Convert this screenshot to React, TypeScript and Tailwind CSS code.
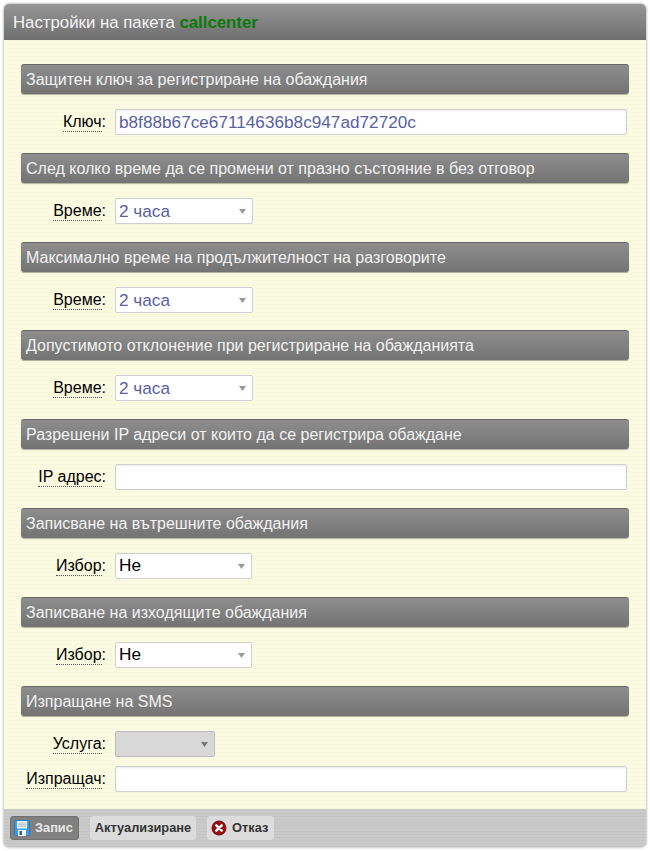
function Bar({ children }: { children: React.ReactNode }) {
  return (
    <div className="h-[30px] flex items-center pl-[5px] rounded-[3px] border-t border-[#666] bg-gradient-to-b from-[#8e8e8e] to-[#737373] text-[16px] text-[#f2f2f2] shadow-[0_1px_1px_rgba(0,0,0,0.3)]">
      {children}
    </div>
  );
}

function Row({ label, children }: { label: string; children: React.ReactNode }) {
  return (
    <div className="flex items-center h-[26px]">
      <div className="w-[85px] shrink-0 flex justify-end text-[16px] leading-[18px] text-black">
        <span className="border-b border-dotted border-[#555]">{label}</span>:
      </div>
      <div className="w-[9px] shrink-0" />
      {children}
    </div>
  );
}

function TextBox({ value }: { value?: string }) {
  return (
    <div className="w-[512px] h-[26px] flex items-center pl-[3px] pt-[1px] bg-white border border-[#cfcfcf] rounded-[2px] text-[17.2px] text-[#5a5f9f] shadow-[inset_0_1px_2px_rgba(0,0,0,0.08)]">
      {value}
    </div>
  );
}

function SelectBox({ value, width, dark, disabled }: { value?: string; width: string; dark?: boolean; disabled?: boolean }) {
  return (
    <div
      className={`${width} h-[26px] flex items-center justify-between pl-[3px] pr-[6px] border rounded-[2px] text-[17.2px] ${
        dark ? 'text-black' : 'pt-[1px] text-[#5a5f9f]'
      } ${disabled ? 'bg-[#d8d8d8] border-[#bdbdbd]' : 'bg-white border-[#cfcfcf]'}`}
    >
      <span>{value}</span>
      <svg width="7" height="5" viewBox="0 0 7 5">
        <path d="M0 0h7L3.5 5z" fill={disabled ? '#777' : '#999'} />
      </svg>
    </div>
  );
}

function FloppyIcon() {
  return (
    <svg width="16" height="16" viewBox="0 0 16 16">
      <rect x="0.5" y="0.5" width="15" height="15" rx="1" fill="#3d9be0" stroke="#2a78b8" />
      <rect x="3" y="1" width="10" height="7.5" fill="#f4f8fb" />
      <path d="M4 3h8M4 4.7h8M4 6.4h8" stroke="#9aa8b5" strokeWidth="0.8" />
      <rect x="4" y="10" width="8" height="6" fill="#f0f4f8" />
      <rect x="5.5" y="11" width="2.5" height="4" fill="#2a5f8f" />
    </svg>
  );
}

function CancelIcon() {
  return (
    <svg width="16" height="16" viewBox="0 0 16 16">
      <circle cx="8" cy="8" r="7.5" fill="#8e1212" />
      <path d="M5.3 5.3l5.4 5.4M10.7 5.3l-5.4 5.4" stroke="#fff" strokeWidth="2.4" strokeLinecap="round" />
    </svg>
  );
}

const sections = [
  { title: 'Защитен ключ за регистриране на обаждания', label: 'Ключ', gap: 'mb-[18px]', kind: 'key' },
  { title: 'След колко време да се промени от празно състояние в без отговор', label: 'Време', gap: 'mb-[18px]', kind: 'time' },
  { title: 'Максимално време на продължителност на разговорите', label: 'Време', gap: 'mb-[17px]', kind: 'time' },
  { title: 'Допустимото отклонение при регистриране на обажданията', label: 'Време', gap: 'mb-[18px]', kind: 'time' },
  { title: 'Разрешени IP адреси от които да се регистрира обаждане', label: 'IP адрес', gap: 'mb-[18px]', kind: 'ip' },
  { title: 'Записване на вътрешните обаждания', label: 'Избор', gap: 'mb-[18px]', kind: 'choice' },
  { title: 'Записване на изходящите обаждания', label: 'Избор', gap: 'mb-[18px]', kind: 'choice' },
];

export default function App() {
  return (
    <div className="w-[650px] h-[851px] bg-white pt-[4px] pl-[4px] font-['Liberation_Sans',Arial,sans-serif]">
      <div className="w-[642px] h-[843px] flex flex-col rounded-[5px] overflow-hidden shadow-[0_0_3px_rgba(0,0,0,0.45)]">
        <div className="h-[36px] shrink-0 flex items-center pl-[9px] pt-[1px] bg-gradient-to-b from-[#969696] to-[#6f6f6f] text-[16.8px] text-[#f4f4f4]">
          Настройки на пакета&nbsp;<b className="text-[#0a7a0a]">callcenter</b>
        </div>
        <div className="flex-1 px-[17px] pt-[24px] bg-[#fbfbe1] bg-[repeating-linear-gradient(0deg,rgba(0,0,0,0.012)_0_1px,transparent_1px_4px)]">
          {sections.map((s) => (
            <div key={s.title} className={s.gap}>
              <Bar>{s.title}</Bar>
              <div className="mt-[15px]">
                <Row label={s.label}>
                  {s.kind === 'key' && <TextBox value="b8f88b67ce67114636b8c947ad72720c" />}
                  {s.kind === 'ip' && <TextBox />}
                  {s.kind === 'time' && <SelectBox value="2 часа" width="w-[138px]" />}
                  {s.kind === 'choice' && <SelectBox value="Не" width="w-[137px]" dark />}
                </Row>
              </div>
            </div>
          ))}
          <Bar>Изпращане на SMS</Bar>
          <div className="mt-[15px] flex flex-col gap-[9px]">
            <Row label="Услуга">
              <SelectBox width="w-[100px]" disabled />
            </Row>
            <Row label="Изпращач">
              <TextBox />
            </Row>
          </div>
        </div>
        <div className="h-[38px] shrink-0 flex items-center gap-[11px] pl-[6px] bg-[#c8c8c8] bg-[repeating-linear-gradient(0deg,#c4c4c4_0_1px,#cacaca_1px_3px)] text-[12.8px] font-bold">
          <div className="h-[24px] w-[69px] flex items-center gap-[5px] pl-[3px] rounded-[3px] bg-[#808080] border border-[#707070] text-[#e8e8e8]">
            <FloppyIcon />
            Запис
          </div>
          <div className="h-[24px] w-[106px] flex items-center justify-center rounded-[3px] bg-[#dcdcdc] text-[#333]">
            Актуализиране
          </div>
          <div className="h-[24px] w-[67px] flex items-center gap-[5px] pl-[4px] rounded-[3px] bg-[#dcdcdc] text-[#333]">
            <CancelIcon />
            Отказ
          </div>
        </div>
      </div>
    </div>
  );
}
